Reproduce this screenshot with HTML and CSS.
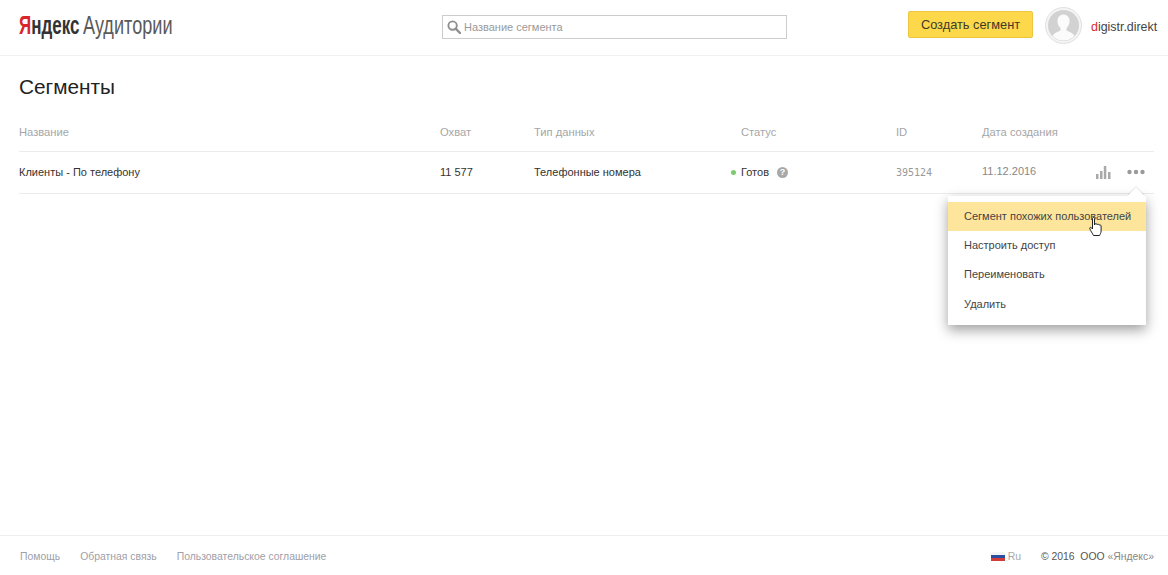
FILE: index.html
```html
<!DOCTYPE html>
<html lang="ru">
<head>
<meta charset="utf-8">
<title>Яндекс Аудитории</title>
<link rel="stylesheet" href="styles.css">
</head>
<body>
<div class="page">
  <header class="header">
    <div class="logo"><span class="logo-ya"><span class="logo-red">Я</span>ндекс</span><span class="logo-aud">Аудитории</span></div>
    <div class="search">
      <svg class="search-icon" width="14" height="14" viewBox="0 0 14 14"><circle cx="5.6" cy="5.6" r="4.2" fill="none" stroke="#8f8f8f" stroke-width="1.9"/><path d="M8.7 8.7 L13 13" stroke="#8f8f8f" stroke-width="2.4" stroke-linecap="round"/></svg>
      <span class="search-text">Название сегмента</span>
    </div>
    <div class="user">
      <div class="create">Создать сегмент</div>
      <svg class="avatar" width="37" height="37" viewBox="0 0 37 37"><circle cx="18.5" cy="18.5" r="18" fill="#f4f4f4" stroke="#e0e0e0"/><circle cx="18.5" cy="18.5" r="15.500" fill="#d2d2d2"/><path d="M18.5 7.5c-4 0-6 3-6 6.500 0 3 1.200 5.500 3 7v2.500c-2.500 1.500-6.500 2.200-8 5.500a15.500 15.500 0 0 0 22 0c-1.500-3.300-5.500-4-8-5.500V21c1.800-1.500 3-4 3-7 0-3.500-2-6.500-6-6.500z" fill="#fbfbfb"/></svg>
      <div class="username"><span class="logo-red">d</span>igistr.direkt</div>
    </div>
  </header>
  <main class="main">
    <h1 class="title">Сегменты</h1>
    <div class="row head">
      <div>Название</div><div>Охват</div><div>Тип данных</div><div class="status-head">Статус</div><div>ID</div><div>Дата создания</div><div></div>
    </div>
    <div class="row body">
      <div>Клиенты - По телефону</div>
      <div>11 577</div>
      <div>Телефонные номера</div>
      <div class="status"><span class="dot"></span><span>Готов</span><span class="help">?</span></div>
      <div class="id">395124</div>
      <div class="date">11.12.2016</div>
      <div class="actions">
        <svg width="16" height="13" viewBox="0 0 16 13"><path d="M1 8h2.500v5H1zM5 5h2.500v8H5zM8.800 0h2.500v13H8.800zM13 6h2.500v7H13z" fill="#a9a9a9"/></svg>
        <svg width="18" height="6" viewBox="0 0 18 6"><circle cx="2.500" cy="3" r="2.200" fill="#9a9a9a"/><circle cx="9" cy="3" r="2.200" fill="#9a9a9a"/><circle cx="15.500" cy="3" r="2.200" fill="#9a9a9a"/></svg>
      </div>
    </div>
    <div class="menu">
      <div class="menu-arrow"></div>
      <div class="menu-item active">Сегмент похожих пользователей</div>
      <div class="menu-item">Настроить доступ</div>
      <div class="menu-item">Переименовать</div>
      <div class="menu-item">Удалить</div>
      <svg class="cursor" width="14" height="20" viewBox="0 0 14 20"><path d="M3.500 1.500c0-1.300 2-1.300 2 0V8l.5-1c.8-.7 2-.4 2 .7.600-.8 2-.6 2.100.5.700-.6 2-.3 2 .8v5c0 2-1 3-1.500 4.500h-6.100C3.500 16.500 1.500 13.500.8 11.800c-.5-1.200.8-2 1.700-1l1 1.200z" fill="#fff" stroke="#222" stroke-width="1" stroke-linejoin="round"/></svg>
    </div>
  </main>
  <footer class="footer">
    <nav class="links"><span>Помощь</span><span>Обратная связь</span><span>Пользовательское соглашение</span></nav>
    <div class="legal">
      <svg class="flag" width="14" height="9" viewBox="0 0 14 9"><rect width="14" height="3" fill="#f4f4f4"/><rect y="3" width="14" height="3" fill="#2b4fa0"/><rect y="6" width="14" height="3" fill="#d43b3b"/></svg>
      <span class="lang">Ru</span>
      <span class="copy">© 2016  ООО <span class="ya">«Яндекс»</span></span>
    </div>
  </footer>
</div>
</body>
</html>
```
FILE: styles.css
```css
* { box-sizing: border-box; }
html, body { margin: 0; padding: 0; background: #fff; }
body { font-family: "Liberation Sans", Arial, sans-serif; color: #222; font-size: 11px; }
.page { width: 1168px; height: 575px; display: flex; flex-direction: column; overflow: hidden; }

.header { height: 56px; flex: none; border-bottom: 1px solid #f1f1f1; display: flex; align-items: center; padding: 0 10px 0 19px; }
.logo { width: 423px; flex: none; display: flex; font-size: 25px; line-height: 28px; margin-top: -5px; white-space: nowrap; }
.logo-ya { display: block; width: 64px; flex: none; font-weight: 700; color: #333; transform: scaleX(.68); transform-origin: left center; }
.logo-red { color: #d8262c; }
.logo-aud { display: block; color: #5a5a5a; transform: scaleX(.725); transform-origin: left center; }
.search { width: 345px; height: 24px; flex: none; border: 1px solid #ccc; display: flex; align-items: center; padding-left: 4px; margin-top: -1px; }
.search-icon { margin-right: 3px; }
.search-text { color: #9a9a9a; font-size: 11px; }
.user { display: flex; align-items: center; margin-left: 121px; margin-top: -4px; }
.create { width: 125px; height: 27px; margin-top: -2px; background: #fdd84b; border: 1px solid #ecc63f; border-radius: 2px; font-size: 12.800px; line-height: 25px; text-align: center; color: #3d3a25; }
.avatar { margin-left: 12px; }
.username { margin-left: 9px; margin-top: 2px; font-size: 12.400px; color: #444; white-space: nowrap; }

.main { flex: 1; position: relative; padding: 0 14px 0 19px; }
.title { margin: 19px 0 0; font-size: 20.800px; line-height: 24px; font-weight: 400; color: #222; }
.row { display: grid; grid-template-columns: 421px 94px 197px 165px 86px 113px 1fr; align-items: center; }
.head { height: 39px; margin-top: 14px; color: #a6a6a6; font-size: 11.200px; border-bottom: 1px solid #ececec; padding-bottom: 1px; }
.status-head { padding-left: 10px; }
.body { height: 42px; border-bottom: 1px solid #ececec; color: #333; font-size: 11px; padding-bottom: 1px; }
.status { display: flex; align-items: center; }
.dot { width: 5px; height: 5px; border-radius: 50%; background: #7ccb6e; margin-right: 5px; }
.help { width: 11px; height: 11px; border-radius: 50%; background: #a8a8a8; color: #fff; font-size: 9px; line-height: 11px; text-align: center; font-weight: 700; margin-left: 8px; }
.id { font-family: "DejaVu Sans Mono", "Liberation Mono", monospace; font-size: 10px; color: #999; }
.date { color: #888; font-size: 11px; padding-bottom: 2px; }
.actions { display: flex; align-items: center; gap: 16px; }
.menu { position: absolute; left: 948px; top: 140px; width: 198px; height: 129px; background: #fff; padding-top: 6px; box-shadow: 0 5px 12px rgba(0,0,0,.38); }
.menu-arrow { position: absolute; right: 4px; top: -6px; width: 12px; height: 12px; background: #fff; transform: rotate(45deg); box-shadow: -1px -1px 1px rgba(0,0,0,.08); }
.menu-item { position: relative; height: 29.200px; padding-left: 16px; font-size: 11px; line-height: 29px; color: #444; }
.menu-item.active { background: #fde69b; }
.cursor { position: absolute; left: 141px; top: 21px; }

.footer { height: 40px; flex: none; border-top: 1px solid #eee; display: flex; justify-content: space-between; align-items: center; padding: 2px 14px 0 20px; font-size: 10.400px; color: #a0a0a8; }
.links { display: flex; gap: 20px; }
.legal { display: flex; align-items: center; }
.flag { margin-right: 3px; }
.lang { color: #a8a8a8; margin-right: 20px; }
.copy { color: #555; white-space: pre; }
.ya { color: #888; }
```
